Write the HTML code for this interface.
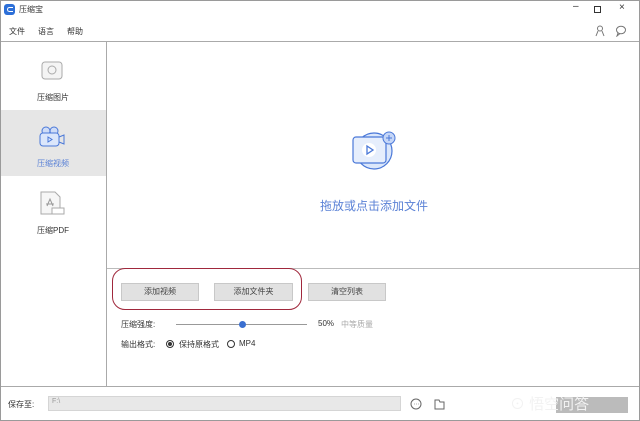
<!DOCTYPE html><html><head><meta charset="utf-8"><style>
*{margin:0;padding:0;box-sizing:border-box}
body{width:640px;height:421px;overflow:hidden;background:#fff;font-family:"Liberation Sans","Noto Sans CJK SC",sans-serif;font-size:8px;color:#333;position:relative}
.a{position:absolute}
.btn{position:absolute;top:283px;height:18px;background:#e1e1e1;border:1px solid #c8c8c8;text-align:center;line-height:16px;font-size:8px;color:#444}
</style></head><body>
<div class="a" style="left:0;top:0;width:640px;height:421px;border:1px solid #9a9a9a"></div>
<div class="a" style="left:4px;top:4px;width:11px;height:11px;border-radius:3px;background:#2c6fd8"></div>
<div class="a" style="left:7px;top:7px;width:6px;height:5px;border:1.5px solid #fff;border-right:none;border-radius:3px 0 0 3px"></div>
<div class="a" style="left:19px;top:4px;font-size:8px">压缩宝</div>
<div class="a" style="left:573px;top:1px;font-size:10px;color:#333">–</div>
<div class="a" style="left:594px;top:6px;width:7px;height:7px;border:1px solid #333"></div>
<div class="a" style="left:619px;top:2px;font-size:10px">×</div>
<svg class="a" style="left:594px;top:25px" width="40" height="12"><circle cx="6" cy="3.5" r="2.5" fill="none" stroke="#777"/><path d="M2 11 L4 6 M10 11 L8 6" stroke="#777" fill="none"/><ellipse cx="27" cy="5" rx="4.5" ry="3.8" fill="none" stroke="#777"/><path d="M24 8 L23 11 L26 8.5" stroke="#777" fill="none"/></svg>
<div class="a" style="left:9px;top:26px">文件</div>
<div class="a" style="left:38px;top:26px">语言</div>
<div class="a" style="left:67px;top:26px">帮助</div>
<div class="a" style="left:1px;top:41px;width:638px;height:1px;background:#aaa"></div>
<div class="a" style="left:106px;top:42px;width:1px;height:344px;background:#aaa"></div>
<div class="a" style="left:1px;top:110px;width:105px;height:66px;background:#e6e6e6"></div>
<svg class="a" style="left:40px;top:60px" width="26" height="22"><rect x="2" y="2" width="20" height="17" rx="3" fill="#f4f4f4" stroke="#aaa"/><circle cx="12" cy="10" r="4" fill="none" stroke="#aaa"/></svg>
<div class="a" style="left:37px;top:92px">压缩图片</div>
<svg class="a" style="left:38px;top:125px" width="28" height="24"><circle cx="8" cy="6" r="4" fill="#cfdcf7" stroke="#4a78d8"/><circle cx="16" cy="6" r="4" fill="#cfdcf7" stroke="#4a78d8"/><rect x="2" y="8" width="19" height="13" rx="3" fill="#dbe6fb" stroke="#4a78d8"/><path d="M21 12 L26 10 V19 L21 17" fill="none" stroke="#4a78d8"/><path d="M10 12 L14 14.5 L10 17Z" fill="none" stroke="#4a78d8"/></svg>
<div class="a" style="left:37px;top:158px;color:#5b82d6">压缩视频</div>
<svg class="a" style="left:38px;top:190px" width="28" height="26"><path d="M3 2 H17 L22 7 V24 H3Z" fill="#f6f6f6" stroke="#aaa"/><path d="M9 16 L12 9 L15 16 M8 14 H16" stroke="#999" fill="none"/><rect x="14" y="18" width="12" height="6" fill="#fff" stroke="#aaa"/></svg>
<div class="a" style="left:37px;top:225px">压缩PDF</div>
<svg class="a" style="left:350px;top:127px" width="48" height="48"><circle cx="24" cy="24" r="18" fill="#dbe7fb" stroke="#4a78d8" stroke-width="1.2"/><rect x="3" y="10" width="33" height="26" rx="3" fill="#e6eefc" stroke="#4a78d8" stroke-width="1.2"/><circle cx="19" cy="23" r="7" fill="#fff"/><path d="M17 19 L23 23 L17 27Z" fill="none" stroke="#4a78d8" stroke-width="1.3"/><circle cx="39" cy="11" r="6" fill="#c5d6f7" stroke="#4a78d8"/><path d="M39 8 V14 M36 11 H42" stroke="#4a78d8"/></svg>
<div class="a" style="left:320px;top:197px;font-size:12px;color:#5b82d6">拖放或点击添加文件</div>
<div class="a" style="left:107px;top:268px;width:532px;height:1px;background:#bbb"></div>
<div class="btn" style="left:121px;width:78px">添加视频</div>
<div class="btn" style="left:214px;width:79px">添加文件夹</div>
<div class="btn" style="left:308px;width:78px">清空列表</div>
<div class="a" style="left:112px;top:268px;width:190px;height:42px;border:1.5px solid #a0283c;border-radius:13px"></div>
<div class="a" style="left:121px;top:319px">压缩强度:</div>
<div class="a" style="left:176px;top:324px;width:131px;height:1px;background:#999"></div>
<div class="a" style="left:239px;top:321px;width:7px;height:7px;border-radius:50%;background:#3a6fd0"></div>
<div class="a" style="left:318px;top:319px">50%</div>
<div class="a" style="left:341px;top:319px;color:#aaa">中等质量</div>
<div class="a" style="left:121px;top:339px">输出格式:</div>
<div class="a" style="left:166px;top:340px;width:8px;height:8px;border-radius:50%;border:1px solid #333"></div>
<div class="a" style="left:168px;top:342px;width:4px;height:4px;border-radius:50%;background:#333"></div>
<div class="a" style="left:179px;top:339px">保持原格式</div>
<div class="a" style="left:227px;top:340px;width:8px;height:8px;border-radius:50%;border:1px solid #333"></div>
<div class="a" style="left:239px;top:339px">MP4</div>
<div class="a" style="left:1px;top:386px;width:638px;height:1px;background:#aaa"></div>
<div class="a" style="left:8px;top:399px">保存至:</div>
<div class="a" style="left:48px;top:396px;width:353px;height:15px;background:#e8e8e8;border:1px solid #d5d5d5"></div>
<div class="a" style="left:52px;top:398px;color:#999;font-size:7px">F:\</div>
<svg class="a" style="left:409px;top:397px" width="36" height="14"><circle cx="7" cy="7" r="5" fill="none" stroke="#666"/><path d="M5 7h0.5M7 7h0.5M9 7h0.5" stroke="#666"/><path d="M26 3 H30 L31 5 H35 V12 H26Z" fill="none" stroke="#666"/></svg>
<div class="a" style="left:556px;top:397px;width:72px;height:16px;background:#bbb"></div>
<div class="a" style="left:510px;top:393px;font-size:15px;color:#f2f2f2">⊙ 悟空问答</div>
</body></html>
